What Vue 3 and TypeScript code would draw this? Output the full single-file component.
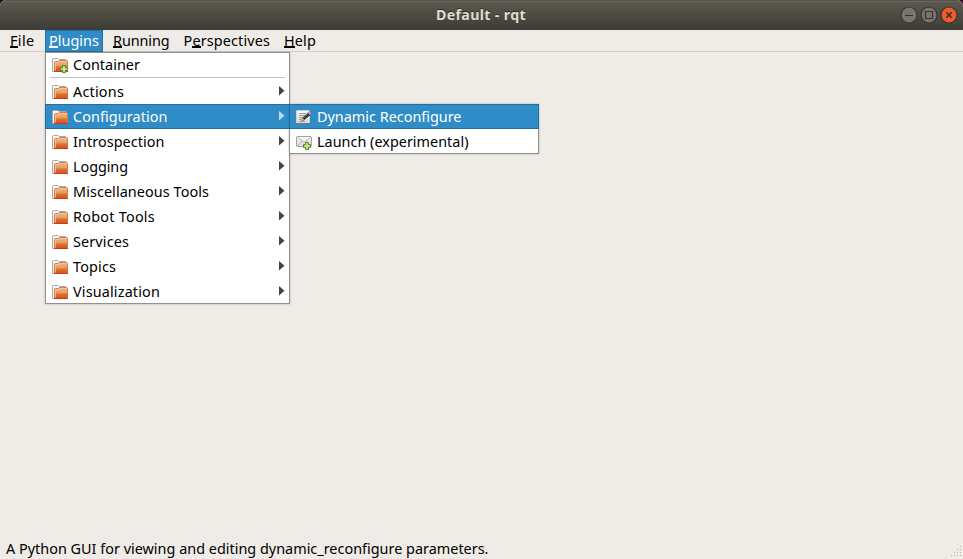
<script setup lang="ts">
import type { Directive } from 'vue'

interface Label { text: string; width: number }
interface BarItem extends Label { key: number; open?: boolean }
interface MenuItem extends Label { active?: boolean }

const bar: BarItem[] = [
  { text: 'File', width: 24.5, key: 0 },
  { text: 'Plugins', width: 50, key: 0, open: true },
  { text: 'Running', width: 56.5, key: 0 },
  { text: 'Perspectives', width: 86.5, key: 1 },
  { text: 'Help', width: 32, key: 0 },
]

const groups: MenuItem[] = [
  { text: 'Actions', width: 51 },
  { text: 'Configuration', width: 94.5, active: true },
  { text: 'Introspection', width: 91.5 },
  { text: 'Logging', width: 55 },
  { text: 'Miscellaneous Tools', width: 136 },
  { text: 'Robot Tools', width: 82 },
  { text: 'Services', width: 56 },
  { text: 'Topics', width: 43 },
  { text: 'Visualization', width: 87 },
]

// Tracks a label out or in so that it fills its nominal width.
const vFit: Directive<HTMLElement, number> = {
  mounted(el, { value }) {
    const n = (el.textContent ?? '').length
    el.style.letterSpacing = `${(value - el.getBoundingClientRect().width) / n}px`
  },
}
</script>

<template>
  <div class="window">
    <svg class="defs" width="0" height="0" aria-hidden="true">
      <defs>
        <linearGradient id="front" x1="0" y1="0" x2="0" y2="1">
          <stop offset="0" stop-color="#edbd91" />
          <stop offset=".45" stop-color="#e79f62" />
          <stop offset=".6" stop-color="#dc742f" />
          <stop offset="1" stop-color="#d84b1c" />
        </linearGradient>
        <linearGradient id="paper" x1="0" y1="0" x2="0" y2="1">
          <stop offset="0" stop-color="#fafafa" />
          <stop offset="1" stop-color="#d8d8d8" />
        </linearGradient>
        <symbol id="folder" viewBox="0 0 16 16">
          <path d="M.5 14.5V2.5Q.5 1.5 1.5 1.5H6L7 2.5H13.5V5" fill="#f7f7f6" stroke="#aaa9a6" />
          <path d="M.5 14.5H3" stroke="#aaa9a6" />
          <path d="M2.5 14.5V5.5Q2.5 4.5 3.5 4.5H6.5L7.5 3.5H14.5Q15.5 3.5 15.5 4.5V14.5Z" fill="url(#front)" stroke="#d87950" />
          <path d="M2 14.5H16" stroke="#c8401b" />
          <path d="M3.5 13.5V5.5H7L8 4.5H14.5" fill="none" stroke="#f3caa5" stroke-opacity=".75" />
        </symbol>
        <symbol id="plus" viewBox="0 0 8 8">
          <path d="M2.5.5h3v2h2v3h-2v2h-3v-2h-2v-3h2z" fill="#a2cf6c" stroke="#568c23" />
          <path d="M4 1.5v5M1.5 4h5" stroke="#d5edb1" />
        </symbol>
      </defs>
    </svg>

    <header class="titlebar">
      <span v-fit="90" class="title">Default - rqt</span>
      <div class="controls">
        <svg class="control" viewBox="0 0 18 18"><circle cx="9" cy="9" r="8" /><path d="M5 9.5h8" /></svg>
        <svg class="control" viewBox="0 0 18 18"><circle cx="9" cy="9" r="8" /><path d="M5.5 5.5h7v7h-7z" /></svg>
        <svg class="control close" viewBox="0 0 18 18"><circle cx="9" cy="9" r="8" /><path d="M6.3 6.3l5.4 5.4M11.7 6.3l-5.4 5.4" /></svg>
      </div>
    </header>

    <nav class="menubar">
      <div v-for="item in bar" :key="item.text" class="bar-item" :class="{ open: item.open }">
        <span v-fit="item.width">{{ item.text.slice(0, item.key) }}<span class="key">{{ item.text[item.key] }}</span>{{ item.text.slice(item.key + 1) }}</span>
      </div>
    </nav>

    <main class="workspace"></main>

    <footer class="status">
      <span v-fit="482.5">A Python GUI for viewing and editing dynamic_reconfigure parameters.</span>
      <svg class="grip" viewBox="0 0 12 12">
        <path d="M9 0h1v1h-1zM6 3h1v1H6zM9 3h1v1H9zM3 6h1v1H3zM6 6h1v1H6zM9 6h1v1H9zM0 9h1v1H0zM3 9h1v1H3zM6 9h1v1H6zM9 9h1v1H9z" />
      </svg>
    </footer>

    <div class="menu plugins">
      <div class="row">
        <svg class="icon" viewBox="0 0 16 16"><use href="#folder" width="16" height="16" /><use href="#plus" x="8" y="8" width="8" height="8" /></svg>
        <span v-fit="67">Container</span>
      </div>
      <div class="separator"></div>
      <div v-for="item in groups" :key="item.text" class="row" :class="{ active: item.active }">
        <svg class="icon" viewBox="0 0 16 16"><use href="#folder" width="16" height="16" /></svg>
        <span v-fit="item.width">{{ item.text }}</span>
        <svg class="arrow" viewBox="0 0 6 10"><path d="M0 0L5.5 4.7L0 9.4Z" /></svg>
      </div>
    </div>

    <div class="menu submenu">
      <div class="row active">
        <svg class="icon" viewBox="0 0 16 16">
          <path d="M.5 1.5h13v13H.5z" fill="url(#paper)" stroke="#d0cec7" />
          <path d="M0 14.5h14" stroke="#77776f" />
          <path d="M3 4.5h7M3 6.5h6M3 8.5h4M3 10.5h3M3 12.5h6" stroke="#9c9c9a" />
          <path d="M5.5 11.5l1-2.5 5.5-5 2 2-6 5z" fill="#333" stroke="#292929" stroke-width=".5" />
          <path d="M5 12l1.3-3 1.8 1.8z" fill="#e7c391" />
          <path d="M11.7 3.8l1.8-1.6 2 2-1.8 1.6z" fill="#d99bd0" stroke="#8d5a87" stroke-width=".5" />
          <path d="M7.5 9.2l4.6-4.2" stroke="#777" stroke-width=".7" />
        </svg>
        <span v-fit="144.5">Dynamic Reconfigure</span>
      </div>
      <div class="row">
        <svg class="icon" viewBox="0 0 16 16">
          <rect x=".5" y="2.5" width="15" height="10" rx="1" fill="url(#paper)" stroke="#a0a09c" />
          <path d="M1 3l7 5.5L15 3M1 12l5-4.5M15 12l-5-4.5" fill="none" stroke="#b4b4b2" />
          <use href="#plus" x="7" y="8" width="8" height="8" />
        </svg>
        <span v-fit="151.5">Launch (experimental)</span>
      </div>
    </div>
  </div>
</template>

<style>
body { margin: 0; background: #300a24; }
</style>

<style scoped>
.window {
  position: relative;
  display: flex;
  flex-direction: column;
  width: 963px;
  height: 559px;
  overflow: hidden;
  border-radius: 6px 6px 0 0;
  background: #efebe7;
  color: #000;
  font: 14.4px/25px "Noto Sans", "Open Sans", sans-serif;
  white-space: pre;
}
.defs { position: absolute; }
.titlebar {
  display: grid;
  grid-template-columns: 1fr auto 1fr;
  align-items: center;
  height: 30px;
  box-sizing: border-box;
  border-top: 1px solid #55524a;
  padding-bottom: 1px;
  background: linear-gradient(#5c594e, #3d3c37);
  box-shadow: inset 0 1px #69665b;
}
.title {
  grid-column: 2;
  margin: -1px 1px 0 0;
  color: #dfdbd2;
  font-size: 14.2px;
  font-weight: 700;
  text-shadow: 0 -1px #2d2c29;
}
.controls { display: flex; gap: 2px; justify-content: flex-end; padding-right: 5px; }
.control { width: 18px; height: 18px; }
.control circle { fill: #77756e; stroke: #373630; stroke-width: 1.2; }
.control path { fill: none; stroke: #35342f; stroke-width: 1.2; }
.control.close circle { fill: #ee5c2b; }
.control.close path { stroke-width: 1.6; }
.menubar {
  display: flex;
  height: 22px;
  box-sizing: border-box;
  padding-left: 6px;
  box-shadow: inset 0 -1px #d4d0cb;
  line-height: 21px;
}
.bar-item { padding: 0 10px 0 4px; flex: none; }
.bar-item.open {
  margin: 0 6px 0 .5px;
  padding: 0 4px;
  background: #308cc6;
  box-shadow: inset 0 0 0 1px #2673a4;
  color: #fff;
}
.key { box-shadow: inset 0 -2px currentColor; display: inline-block; height: 18px; line-height: 21px; vertical-align: top; }
.workspace { flex: 1; }
.status {
  display: flex;
  justify-content: space-between;
  align-items: center;
  height: 18px;
  padding: 0 0 2px 6px;
}
.grip { width: 12px; height: 12px; margin-top: 8px; fill: #b4b1ad; }
.menu {
  position: absolute;
  background: #fff;
  box-shadow: inset 0 0 0 1px #929190, 0 0 2px rgba(0, 0, 0, .25);
}
.plugins { left: 45px; top: 52px; width: 245px; }
.submenu { left: 289px; top: 104px; width: 250px; }
.row {
  display: flex;
  align-items: center;
  height: 25px;
  padding: 0 5px 0 7px;
}
.row.active {
  background: #308cc6;
  box-shadow: inset 0 0 0 1px #2370a0;
  color: #fff;
}
.icon { flex: none; width: 16px; height: 16px; margin: 1px 5px 0 0; }
.arrow { width: 6px; height: 10px; margin: -1px 0 0 auto; fill: #444; }
.active .arrow { fill: #bddcf0; }
.separator { height: 1px; margin: 0 5px 1px; background: #c2c1bf; }
</style>
